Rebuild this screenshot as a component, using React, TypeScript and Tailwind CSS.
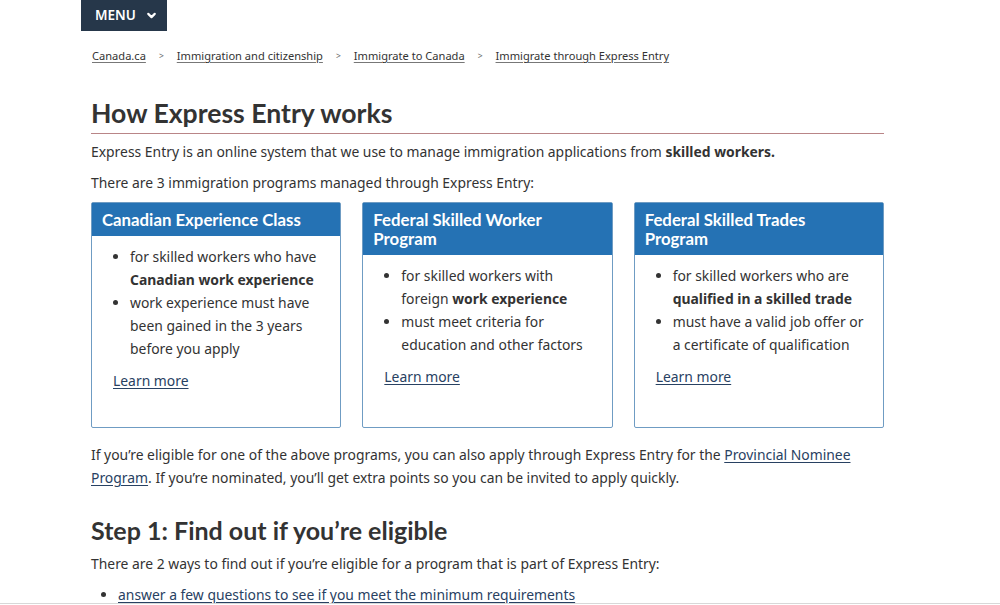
import { ChevronDown } from "lucide-react";

const body = { fontFamily: '"Noto Sans", "Open Sans", sans-serif' };
const head = { fontFamily: 'Lato, "Noto Sans", sans-serif' };

type Program = {
  title: string;
  items: React.ReactNode[];
};

const programs: Program[] = [
  {
    title: "Canadian Experience Class",
    items: [
      <>
        for skilled workers who have <strong>Canadian work experience</strong>
      </>,
      <>work experience must have been gained in the 3 years before you apply</>,
    ],
  },
  {
    title: "Federal Skilled Worker Program",
    items: [
      <>
        for skilled workers with foreign <strong>work experience</strong>
      </>,
      <>must meet criteria for education and other factors</>,
    ],
  },
  {
    title: "Federal Skilled Trades Program",
    items: [
      <>
        for skilled workers who are <strong>qualified in a skilled trade</strong>
      </>,
      <>must have a valid job offer or a certificate of qualification</>,
    ],
  },
];

const crumbs = [
  "Canada.ca",
  "Immigration and citizenship",
  "Immigrate to Canada",
  "Immigrate through Express Entry",
];

function ProgramCard({ p }: { p: Program }) {
  return (
    <div className="flex flex-col border border-[#6f9cc3] rounded-[2px] bg-white">
      <h3
        className="bg-[#2572b4] text-white text-[16.8px] font-bold leading-[19px] pl-[10px] pr-[30px] pt-[7px] pb-[7px]"
        style={head}
      >
        {p.title}
      </h3>
      <div className="pl-[21px] pr-[18px] pt-[9px] pb-[12px]">
        <ul className="list-disc pl-[17px] text-[13.9px] leading-[23px] text-[#333]">
          {p.items.map((it, i) => (
            <li key={i}>{it}</li>
          ))}
        </ul>
        <a href="#" className="inline-block mt-[9px] text-[13.9px] leading-[23px] text-[#284162] underline underline-offset-2">
          Learn more
        </a>
      </div>
    </div>
  );
}

export default function App() {
  return (
    <div className="relative h-[605px] overflow-hidden bg-white text-[#333]" style={body}>
      <div className="pl-[81px]">
        <button className="flex items-center gap-[9px] h-[31px] pl-[14px] pr-[9px] bg-[#26374a] text-white text-[13.5px] font-semibold">
          MENU
          <ChevronDown size={13} strokeWidth={4} />
        </button>
      </div>

      <nav className="pl-[92px] mt-[17px] flex items-center text-[11.1px] leading-[16px]">
        {crumbs.map((c, i) => (
          <span key={c} className="flex items-center">
            {i > 0 && <span className="text-[#666] text-[8.5px] px-[13px]">&gt;</span>}
            <a href="#" className="text-[#333] underline underline-offset-2 decoration-[#777]">
              {c}
            </a>
          </span>
        ))}
      </nav>

      <main className="ml-[91px] w-[793px]">
        <h1
          className="mt-[32px] text-[26.6px] font-bold leading-[34px] pb-[3px] border-b border-[#b98587] text-[#333]"
          style={head}
        >
          How Express Entry works
        </h1>
        <p className="mt-[6px] text-[13.9px] leading-[23px]">
          Express Entry is an online system that we use to manage immigration applications from{" "}
          <strong>skilled workers.</strong>
        </p>
        <p className="mt-[8px] text-[13.9px] leading-[23px]">
          There are 3 immigration programs managed through Express Entry:
        </p>

        <div className="mt-[8px] grid grid-cols-3 gap-[21px] h-[226px]">
          {programs.map((p) => (
            <ProgramCard key={p.title} p={p} />
          ))}
        </div>

        <p className="mt-[15px] text-[13.9px] leading-[23px]">
          If you’re eligible for one of the above programs, you can also apply through Express Entry for the{" "}
          <a href="#" className="text-[#284162] underline underline-offset-2">
            Provincial Nominee Program
          </a>
          . If you’re nominated, you’ll get extra points so you can be invited to apply quickly.
        </p>

        <h2 className="mt-[26px] text-[25px] font-bold leading-[30px] text-[#333]" style={head}>
          Step 1: Find out if you’re eligible
        </h2>
        <p className="mt-[7px] text-[13.9px] leading-[23px]">
          There are 2 ways to find out if you’re eligible for a program that is part of Express Entry:
        </p>
        <ul className="mt-[8px] list-disc pl-[27px] text-[13.9px] leading-[23px]">
          <li>
            <a href="#" className="text-[#284162] underline underline-offset-2">
              answer a few questions to see if you meet the minimum requirements
            </a>
          </li>
        </ul>
      </main>

      <div className="fixed bottom-0 left-0 right-0 h-[2px] bg-white border-t border-[#d8d8d8]" />
    </div>
  );
}
